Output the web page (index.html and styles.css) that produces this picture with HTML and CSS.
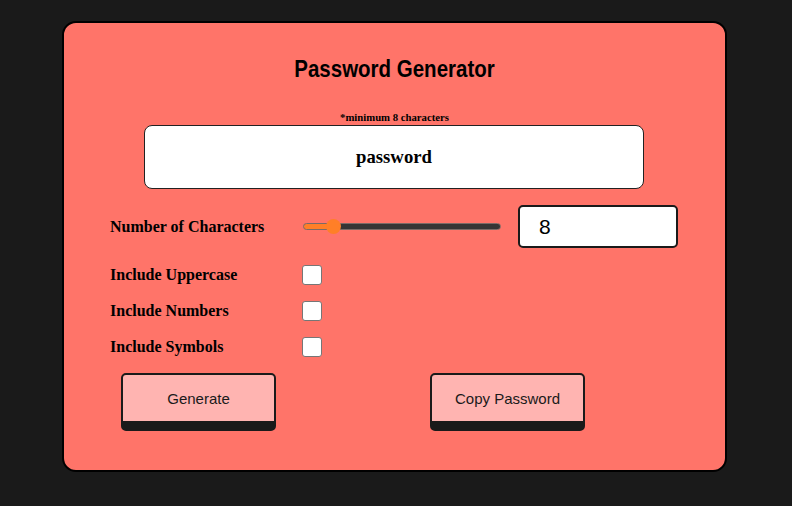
FILE: index.html
```html
<!DOCTYPE html>
<html lang="en">
<head>
<meta charset="utf-8">
<title>Password Generator</title>
<link rel="stylesheet" href="styles.css">
</head>
<body>
<main class="card">
  <h1 class="title">Password Generator</h1>
  <p class="hint">*minimum 8 characters</p>
  <div class="output">password</div>
  <div class="controls">
    <div class="row">
      <label class="label" for="len">Number of Characters</label>
      <input class="range" id="len" type="range" min="5" max="30" value="8" style="--fill: 14.6%">
      <input class="number" type="number" value="8">
    </div>
    <div class="row row-first-check">
      <label class="label" for="up">Include Uppercase</label>
      <input class="check" id="up" type="checkbox">
    </div>
    <div class="row">
      <label class="label" for="num">Include Numbers</label>
      <input class="check" id="num" type="checkbox">
    </div>
    <div class="row">
      <label class="label" for="sym">Include Symbols</label>
      <input class="check" id="sym" type="checkbox">
    </div>
    <div class="buttons">
      <button class="btn" type="button">Generate</button>
      <button class="btn" type="button">Copy Password</button>
    </div>
  </div>
</main>
</body>
</html>
```

FILE: styles.css
```css
html, body {
  margin: 0;
  padding: 0;
  background: #1a1a1a;
}

body {
  padding-top: 21px;
  height: 506px;
  box-sizing: border-box;
  overflow: hidden;
}

.card {
  box-sizing: border-box;
  width: 665px;
  height: 451px;
  margin-left: 62px;
  background: #ff7469;
  border: 2px solid #000;
  border-radius: 14px;
  padding-top: 31px;
  display: flex;
  flex-direction: column;
}

.title {
  margin: 0;
  font-family: "Liberation Sans", Arial, sans-serif;
  font-weight: 700;
  font-size: 24px;
  line-height: 30px;
  text-align: center;
  color: #000;
  transform: scaleX(0.854);
}

.hint {
  margin: 27px 0 0;
  font-family: "Liberation Serif", "Times New Roman", serif;
  font-weight: 700;
  font-size: 10.72px;
  line-height: 12px;
  text-align: center;
  color: #000;
}

.output {
  box-sizing: border-box;
  width: 500px;
  height: 64px;
  margin: 2px 0 0 80px;
  background: #fff;
  border: 1px solid #222;
  border-radius: 8px;
  display: flex;
  align-items: center;
  justify-content: center;
  font-family: "Liberation Serif", "Times New Roman", serif;
  font-weight: 700;
  font-size: 18.72px;
  color: #000;
}

.controls {
  margin-top: 16px;
  display: flex;
  flex-direction: column;
  gap: 16px;
}

.row {
  display: flex;
  align-items: center;
  padding-left: 46px;
}

.row-first-check {
  margin-top: 1px;
}

.label {
  flex: 0 0 192px;
  font-family: "Liberation Serif", "Times New Roman", serif;
  font-weight: 700;
  font-size: 16px;
  color: #000;
}

.range {
  -webkit-appearance: none;
  appearance: none;
  box-sizing: border-box;
  width: 198px;
  height: 7px;
  margin: 0 0 0 1px;
  border: 1px solid #7a6a66;
  border-radius: 4px;
  background: linear-gradient(to right, #ff7f27 0, #ff7f27 var(--fill), #353535 var(--fill), #353535 100%);
  outline: none;
}

.range::-webkit-slider-thumb {
  -webkit-appearance: none;
  appearance: none;
  width: 15px;
  height: 15px;
  border-radius: 50%;
  background: #ff7f27;
  border: none;
}

.number {
  box-sizing: border-box;
  width: 160px;
  height: 43px;
  margin-left: 17px;
  padding: 0 0 0 19px;
  background: #fff;
  border: 2px solid #1a1a1a;
  border-radius: 5px;
  font-family: "Liberation Sans", Arial, sans-serif;
  font-size: 21px;
  color: #000;
  outline: none;
}

.number::-webkit-inner-spin-button,
.number::-webkit-outer-spin-button {
  -webkit-appearance: none;
  margin: 0;
}

.check {
  -webkit-appearance: none;
  appearance: none;
  box-sizing: border-box;
  width: 20px;
  height: 20px;
  margin: 0;
  background: #fff;
  border: 1px solid #767676;
  border-radius: 3px;
}

.buttons {
  display: flex;
  padding-left: 57px;
  gap: 154px;
}

.btn {
  box-sizing: border-box;
  width: 155px;
  height: 58px;
  background: #ffb4b1;
  border: 2px solid #1a1a1a;
  border-bottom-width: 10px;
  border-radius: 5px;
  font-family: "Liberation Sans", Arial, sans-serif;
  font-size: 15px;
  color: #1a1a1a;
  padding: 0;
}
```
